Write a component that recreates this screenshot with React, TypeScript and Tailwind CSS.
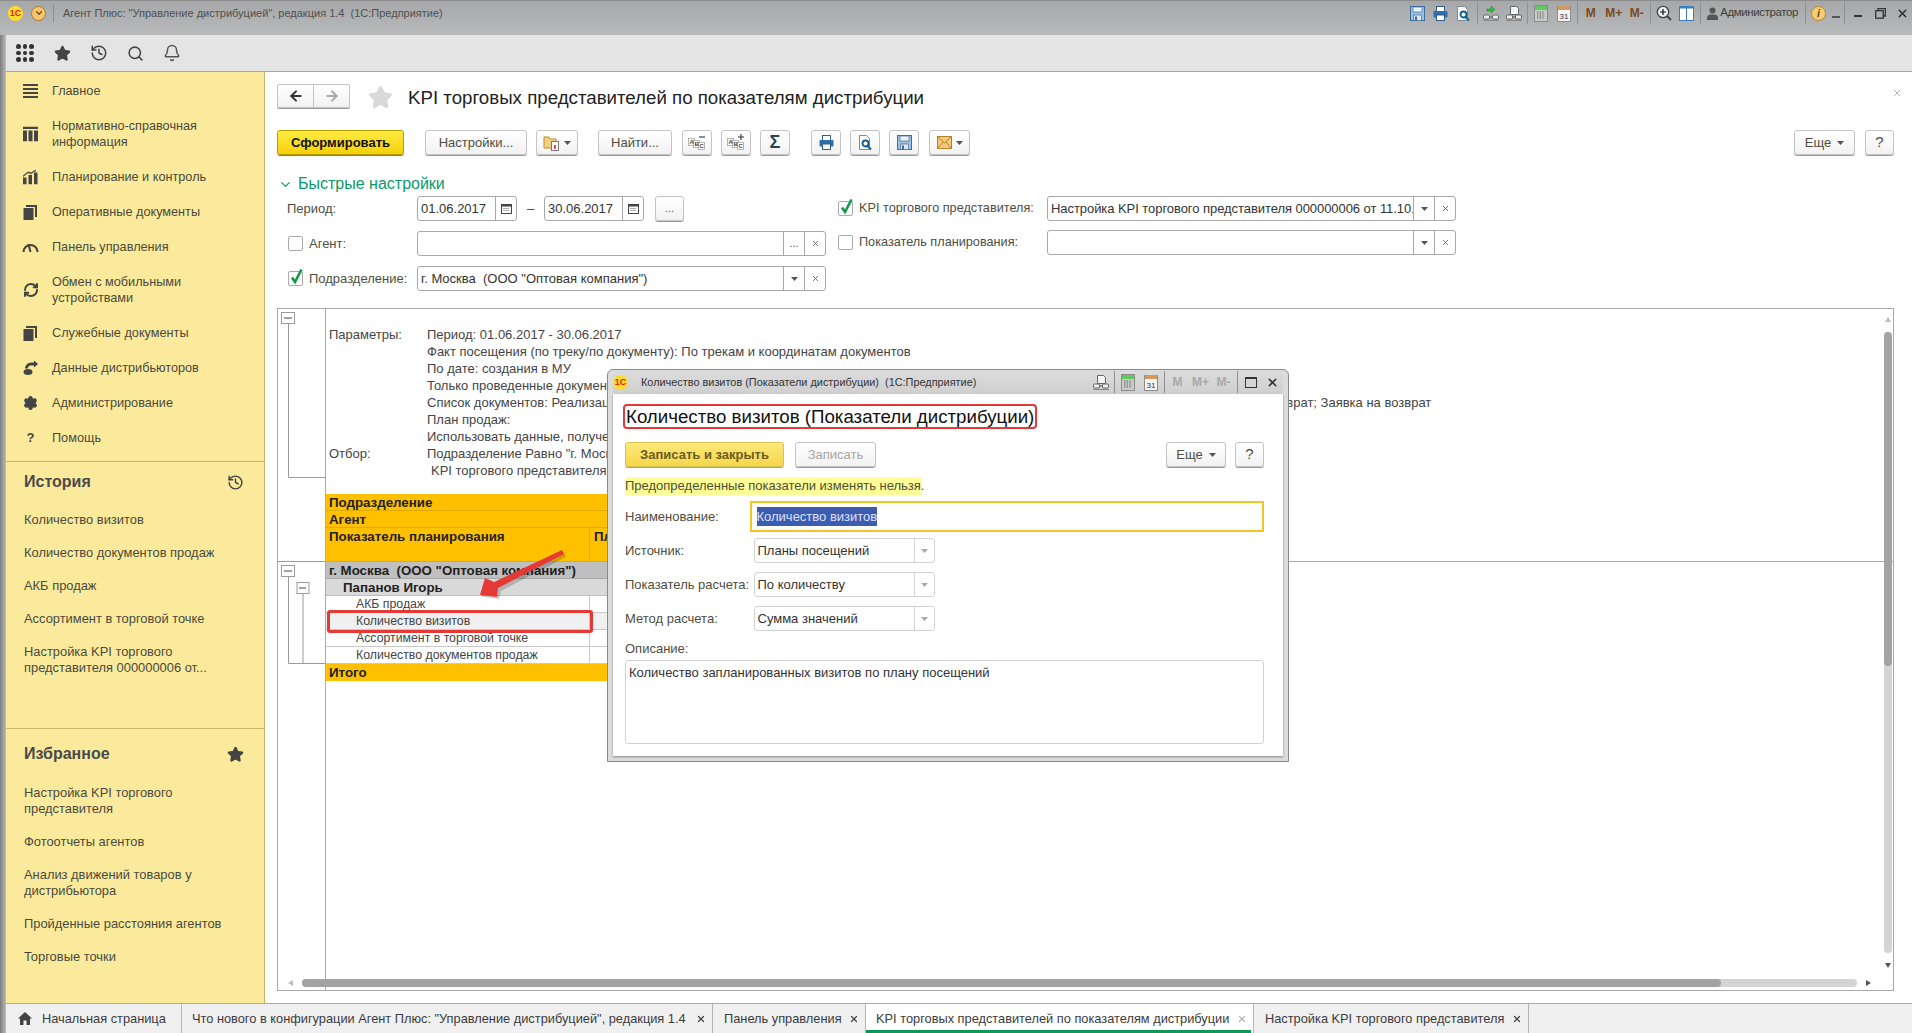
import type { ReactNode } from "react";
import { ArrowLeft, ArrowRight, Bell, ChevronDown, History, RefreshCw, Search, Settings, Star, X } from "lucide-react";

const navItems = [
  { label: ["Главное"], icon: "menu" },
  { label: ["Нормативно-справочная", "информация"], icon: "columns" },
  { label: ["Планирование и контроль"], icon: "bars" },
  { label: ["Оперативные документы"], icon: "docs" },
  { label: ["Панель управления"], icon: "gauge" },
  { label: ["Обмен с мобильными", "устройствами"], icon: "sync" },
  { label: ["Служебные документы"], icon: "docs2" },
  { label: ["Данные дистрибьюторов"], icon: "data" },
  { label: ["Администрирование"], icon: "gear" },
  { label: ["Помощь"], icon: "help" },
];

const historyItems = [
  ["Количество визитов"],
  ["Количество документов продаж"],
  ["АКБ продаж"],
  ["Ассортимент в торговой точке"],
  ["Настройка KPI торгового", "представителя 000000006 от..."],
];

const favoriteItems = [
  ["Настройка KPI торгового", "представителя"],
  ["Фотоотчеты агентов"],
  ["Анализ движений товаров у", "дистрибьютора"],
  ["Пройденные расстояния агентов"],
  ["Торговые точки"],
];

const params = [
  ["Параметры:", "Период: 01.06.2017 - 30.06.2017"],
  ["", "Факт посещения (по треку/по документу): По трекам и координатам документов"],
  ["", "По дате: создания в МУ"],
  ["", "Только проведенные документы"],
  ["", "Список документов: Реализация товаров и услуг; Заказы клиентов; Приходный кассовый ордер; Фотоотчет с торговой точки; Документ на возврат; Заявка на возврат"],
  ["", "План продаж:"],
  ["", "Использовать данные, полученные от агентов"],
  ["Отбор:", 'Подразделение Равно "г. Москва  (ООО "Оптовая компания")"'],
];

function NavIcon({ name }: { name: string }) {
  const c = "#444444";
  if (name === "menu")
    return (
      <svg width="15" height="15" viewBox="0 0 15 15" fill={c}>
        <rect y="0.5" width="15" height="2" />
        <rect y="4.5" width="15" height="2" />
        <rect y="8.5" width="15" height="2" />
        <rect y="12.5" width="15" height="2" />
      </svg>
    );
  if (name === "columns")
    return (
      <svg width="15" height="15" viewBox="0 0 15 15" fill={c}>
        <rect y="0" width="15" height="2.5" />
        <rect y="4" width="4" height="11" />
        <rect x="5.5" y="4" width="4" height="11" />
        <rect x="11" y="4" width="4" height="11" />
      </svg>
    );
  if (name === "bars")
    return (
      <svg width="15" height="15" viewBox="0 0 15 15" fill={c}>
        <rect y="8" width="3.5" height="7" />
        <rect x="5.5" y="5.5" width="3.5" height="9.5" />
        <rect x="11" y="3" width="3.5" height="12" />
        <path d="M0 6 5 2l3 1 5-3v1.5L8 4.5l-3-1-5 4z" />
      </svg>
    );
  if (name === "docs" || name === "docs2")
    return (
      <svg width="15" height="16" viewBox="0 0 15 16" fill={c}>
        <rect x="0.5" y="4" width="10" height="12" />
        <path d="M3 1h11v12h-2V3H3z" />
      </svg>
    );
  if (name === "gauge")
    return (
      <svg width="17" height="14" viewBox="0 0 17 14" fill="none" stroke={c} strokeWidth="2">
        <path d="M1.5 12a7 7 0 0 1 14 0" />
        <path d="M8.5 12 6.5 4" />
      </svg>
    );
  if (name === "sync") return <RefreshCw size={16} strokeWidth={3} color={c} />;
  if (name === "data")
    return (
      <svg width="16" height="15" viewBox="0 0 16 15" fill={c}>
        <path d="M2 8a6 6 0 0 1 6-6h3V0l4 3.5L11 7V5H8a3 3 0 0 0-3 3H2z" />
        <ellipse cx="5" cy="11.5" rx="4.5" ry="3" />
      </svg>
    );
  if (name === "gear") return <Settings size={15} strokeWidth={2.4} color={c} fill={c} />;
  return <span className="text-[13px] font-bold text-[#444]">?</span>;
}

function SideList({ items }: { items: string[][] }) {
  return (
    <div>
      {items.map((lines) => (
        <div key={lines[0]} className="py-[8.5px] pl-[18px] text-[12.9px] leading-4 text-[#4a4a3c]">
          {lines.map((l) => (
            <div key={l}>{l}</div>
          ))}
        </div>
      ))}
    </div>
  );
}

function Sidebar() {
  return (
    <aside className="flex w-[259px] shrink-0 flex-col border-r border-[#c4b866] bg-[#fbea9c]">
      <div className="pt-px">
        {navItems.map((item) => (
          <div key={item.label[0]} className="relative py-[9.5px] pl-[46px] text-[12.7px] leading-4 text-[#4a4a3c]">
            <span className="absolute left-4 top-1/2 flex w-[17px] -translate-y-1/2 justify-center">
              <NavIcon name={item.icon} />
            </span>
            {item.label.map((l) => (
              <div key={l}>{l}</div>
            ))}
          </div>
        ))}
      </div>
      <div className="mt-[6px] h-[267px] border-t border-[#c4b866] pt-[10px]">
        <div className="mb-[11px] flex h-5 items-center justify-between pl-[18px] pr-[20px] text-base font-bold text-[#4a4a4a]">
          История
          <History size={17} strokeWidth={2} color="#444" />
        </div>
        <SideList items={historyItems} />
      </div>
      <div className="border-t border-[#c4b866] pt-[15px]">
        <div className="mb-[12px] flex h-5 items-center justify-between pl-[18px] pr-[20px] text-base font-bold text-[#4a4a4a]">
          Избранное
          <Star size={17} fill="#444" color="#444" />
        </div>
        <SideList items={favoriteItems} />
      </div>
    </aside>
  );
}

function Logo() {
  return (
    <span className="flex h-[15px] w-[15px] items-center justify-center rounded-full bg-[#ffdc2e] text-[9px] font-bold leading-none text-[#d5281b]">
      1С
    </span>
  );
}

function TopIcon({ children, w = "w-[23px]" }: { children: ReactNode; w?: string }) {
  return <span className={`flex h-[24px] shrink-0 items-center justify-center ${w}`}>{children}</span>;
}

function Sep() {
  return <span className="mx-[1.5px] block h-[22px] w-px shrink-0 bg-[#8f8f8f]" />;
}

function FloppyIcon({ size = 15 }: { size?: number }) {
  return (
    <svg width={size} height={size} viewBox="0 0 15 15">
      <rect x="0.5" y="0.5" width="14" height="14" fill="#9fc2e4" stroke="#3e6c9c" />
      <rect x="3" y="1" width="9" height="5" fill="#eef4fa" stroke="#3e6c9c" strokeWidth="0.7" />
      <rect x="3.5" y="9" width="8" height="5.5" fill="#dfe8f0" stroke="#3e6c9c" strokeWidth="0.7" />
      <rect x="5" y="10.5" width="2" height="4" fill="#3e6c9c" />
    </svg>
  );
}

function PrinterIcon({ size = 15 }: { size?: number }) {
  return (
    <svg width={size} height={size} viewBox="0 0 15 15">
      <rect x="3.5" y="0.5" width="8" height="5" fill="#fff" stroke="#2f5f8c" />
      <rect x="0.5" y="5" width="14" height="6.5" rx="1" fill="#2f6fa3" />
      <rect x="3.5" y="9" width="8" height="5.5" fill="#fff" stroke="#2f5f8c" />
    </svg>
  );
}

function PreviewIcon({ size = 15 }: { size?: number }) {
  return (
    <svg width={size} height={size} viewBox="0 0 15 15">
      <path d="M1.5.5h7l3 3v11h-10z" fill="#fff" stroke="#7b8b99" />
      <circle cx="7.5" cy="8.5" r="3" fill="#fff" stroke="#0d5d8f" strokeWidth="1.8" />
      <path d="m9.5 11 3.5 3.5" stroke="#0d5d8f" strokeWidth="2" />
    </svg>
  );
}

function LinkDocIcon({ green }: { green?: boolean }) {
  return (
    <svg width="16" height="15" viewBox="0 0 16 15" fill="none">
      {green ? (
        <path d="M4 3h4V0l4 3.5L8 7V5H4z" fill="#2fc12f" stroke="#1b7a1b" strokeWidth="0.5" />
      ) : (
        <path d="M4.5.5h6l2 2v6h-8z" fill="#f4f4f4" stroke="#666" />
      )}
      <rect x="0.5" y="9" width="6" height="4" rx="1" fill="#eee" stroke="#666" />
      <rect x="9.5" y="9" width="6" height="4" rx="1" fill="#eee" stroke="#666" />
      <path d="M0 14.5h16" stroke="#888" />
      <path d="M6.5 11h3" stroke="#666" />
    </svg>
  );
}

function CalcIcon() {
  return (
    <svg width="14" height="17" viewBox="0 0 14 17">
      <rect x="0.5" y="0.5" width="13" height="16" fill="#c9ccc9" stroke="#8a8a8a" />
      <rect x="1" y="1" width="12" height="4" fill="#63c763" />
      <path d="M3 7h8M3 9h8M3 11h8M3 13h8" stroke="#666" strokeDasharray="1.4 1.2" />
    </svg>
  );
}

function CalIcon() {
  return (
    <svg width="14" height="17" viewBox="0 0 14 17">
      <rect x="0.5" y="1.5" width="13" height="15" fill="#f4f4f4" stroke="#8a8a8a" />
      <rect x="1" y="1" width="12" height="4" fill="#d39a5f" />
      <text x="7" y="14" fontSize="8" textAnchor="middle" fill="#333" fontFamily="Liberation Sans">
        31
      </text>
    </svg>
  );
}

function ZoomPlusIcon() {
  return (
    <svg width="16" height="16" viewBox="0 0 16 16" fill="none">
      <circle cx="7" cy="7" r="5.7" fill="#eee" stroke="#444" strokeWidth="1.3" />
      <path d="M7 4v6M4 7h6" stroke="#111" strokeWidth="1.2" />
      <path d="m11 11 4 4" stroke="#444" strokeWidth="2" />
    </svg>
  );
}

function MemIcons({ dim }: { dim?: boolean }) {
  const cls = dim ? "text-[#a9a9a9]" : "text-[#7a4a24]";
  return (
    <>
      {["M", "M+", "M-"].map((m) => (
        <TopIcon key={m}>
          <span className={`text-[12px] font-bold ${cls}`}>{m}</span>
        </TopIcon>
      ))}
    </>
  );
}

function TitleBar() {
  return (
    <div className="flex h-[35px] shrink-0 items-start justify-between border-t border-[#8d8d8d] bg-linear-to-b from-[#a6a7a8] to-[#b8b9ba]">
      <div className="flex h-[24px] items-center">
        <span className="ml-[8px]">
          <Logo />
        </span>
        <span className="ml-[8px] flex h-[15px] w-[15px] items-center justify-center rounded-full border border-[#b47a1f] bg-[#f4c56f]">
          <ChevronDown size={10} strokeWidth={3} color="#6b4a10" />
        </span>
        <span className="ml-[7px] h-[18px] w-px bg-[#8f8f8f]" />
        <span className="ml-[9px] whitespace-pre text-[11px] text-[#4f5050]">
          Агент Плюс: "Управление дистрибуцией", редакция 1.4  (1С:Предприятие)
        </span>
      </div>
      <div className="flex h-[24px] items-center">
        <TopIcon><FloppyIcon /></TopIcon>
        <TopIcon><PrinterIcon /></TopIcon>
        <TopIcon><PreviewIcon /></TopIcon>
        <Sep />
        <TopIcon><LinkDocIcon green /></TopIcon>
        <TopIcon><LinkDocIcon /></TopIcon>
        <Sep />
        <TopIcon><CalcIcon /></TopIcon>
        <TopIcon><CalIcon /></TopIcon>
        <Sep />
        <MemIcons />
        <Sep />
        <TopIcon><ZoomPlusIcon /></TopIcon>
        <TopIcon>
          <svg width="15" height="15" viewBox="0 0 15 15">
            <rect x="0.5" y="0.5" width="14" height="14" fill="#fff" stroke="#3a80c0" />
            <rect x="0" y="0" width="15" height="2.5" fill="#3a80c0" />
            <rect x="7" y="0" width="1" height="15" fill="#3a80c0" />
          </svg>
        </TopIcon>
        <Sep />
        <span className="ml-[3px] flex w-[14px] justify-center">
          <svg width="11" height="13" viewBox="0 0 11 13" fill="#555">
            <circle cx="5.5" cy="3.5" r="3" />
            <path d="M0 13V11q0-2.5 3-3.5h5q3 1 3 3.5V13z" />
          </svg>
        </span>
        <span className="ml-[1px] text-[11.5px] tracking-[-0.4px] text-[#3f3f36]">Администратор</span>
        <span className="ml-[5px]"><Sep /></span>
        <TopIcon>
          <span className="flex h-[15px] w-[15px] items-center justify-center rounded-full border border-[#bd8426] bg-[#f6cd72] text-[11px] font-bold italic leading-none text-[#6b4a10]">
            i
          </span>
        </TopIcon>
        <span className="flex w-3 items-center justify-center pt-[8px]">
          <span className="h-[2px] w-[8px] bg-[#555]" />
        </span>
        <Sep />
        <TopIcon><span className="mt-[6px] h-[2px] w-[8px] bg-[#333]" /></TopIcon>
        <TopIcon>
          <svg width="11" height="11" viewBox="0 0 11 11" fill="none" stroke="#333" strokeWidth="1.3">
            <rect x="0.7" y="2.7" width="7.5" height="7.5" />
            <path d="M3 2.7V.7h7.3V8H8" />
          </svg>
        </TopIcon>
        <TopIcon w="w-[20px]"><X size={13} strokeWidth={3} color="#333" /></TopIcon>
      </div>
    </div>
  );
}

function AppToolbar() {
  return (
    <div className="flex h-[37px] shrink-0 items-center border-b border-[#a8a8a8] bg-[#e4e4e4]">
      <span className="ml-[10px] grid w-[18px] grid-cols-3 gap-[2px]">
        {Array.from({ length: 9 }).map((_, i) => (
          <span key={i} className="h-[4.5px] w-[4.5px] rounded-full bg-[#333]" />
        ))}
      </span>
      <Star size={17} fill="#444" color="#444" className="ml-[20px]" />
      <History size={18} color="#444" className="ml-[19px]" />
      <Search size={17} color="#444" strokeWidth={2.2} className="ml-[19px]" />
      <Bell size={18} color="#555" className="ml-[19px]" />
    </div>
  );
}

function Btn({ className = "", children }: { className?: string; children: ReactNode }) {
  return (
    <div
      className={`flex h-[25px] shrink-0 items-center justify-center rounded-[3px] border border-[#c4c4c4] bg-linear-to-b from-white to-[#f2f2f2] text-[13px] text-[#4e4e40] shadow-[0_1px_0_#9a9a9a] ${className}`}
    >
      {children}
    </div>
  );
}

function Caret({ color = "#555" }: { color?: string }) {
  return (
    <svg width="7" height="4" viewBox="0 0 7 4" fill={color}>
      <path d="M0 0h7L3.5 4z" />
    </svg>
  );
}

function CalSmall() {
  return (
    <svg width="11" height="11" viewBox="0 0 11 11">
      <rect x="0.5" y="1.5" width="10" height="9" fill="#fff" stroke="#444" />
      <rect x="1" y="1" width="9" height="2.5" fill="#444" />
      <path d="M2.5 5.5h6M2.5 7.5h6" stroke="#555" strokeDasharray="1 1" />
    </svg>
  );
}

function XSmall() {
  return <X size={9} strokeWidth={2.2} color="#555" />;
}

function Dots() {
  return <span className="text-[11px] leading-none text-[#555]">...</span>;
}

function AbcIcon({ sign }: { sign: "-" | "+" }) {
  return (
    <svg width="20" height="17" viewBox="0 0 20 17" fontFamily="Liberation Sans" fontSize="6" fontWeight="bold" fill="#444">
      <rect x="1.5" y="4.5" width="6" height="7" fill="#fff" stroke="#999" strokeWidth="0.7" />
      <rect x="6.5" y="6.5" width="6" height="7" fill="#fff" stroke="#999" strokeWidth="0.7" />
      <rect x="11.5" y="8.5" width="6" height="7" fill="#fff" stroke="#999" strokeWidth="0.7" />
      <text x="2.5" y="10">A</text>
      <text x="7.5" y="12">B</text>
      <text x="12.5" y="14">C</text>
      <path d={sign === "-" ? "M12 3h6" : "M12 3h6M15 0v6"} stroke="#333" strokeWidth="1.1" />
    </svg>
  );
}

function FieldBox({
  className = "",
  text = "",
  parts,
  border = "border-[#a9a9a9]",
  textClass = "",
}: {
  className?: string;
  text?: string;
  parts: { w: string; el: ReactNode }[];
  border?: string;
  textClass?: string;
}) {
  return (
    <div className={`flex h-[25px] shrink-0 items-stretch rounded-[3px] border bg-white ${border} ${className}`}>
      <div className={`min-w-0 flex-1 overflow-hidden whitespace-pre pl-[3px] text-[13px] leading-[23px] text-[#333] ${textClass}`}>
        {text}
      </div>
      {parts.map((p, i) => (
        <div key={i} className={`flex shrink-0 items-center justify-center border-l ${border} ${p.w}`}>
          {p.el}
        </div>
      ))}
    </div>
  );
}

function Check({ on }: { on?: boolean }) {
  return (
    <span className="relative block h-[15px] w-[15px] shrink-0 rounded-[2px] border border-[#a9a9a9] bg-white">
      {on && (
        <svg className="absolute -top-[4px] left-0" width="15" height="17" viewBox="0 0 15 17" fill="none">
          <path d="M3 9.5 6 14 12.5 1.5" stroke="#0f9a4a" strokeWidth="2.6" />
        </svg>
      )}
    </span>
  );
}

function QuickSettings() {
  const label = "text-[13px] text-[#4e4e40]";
  const labelRight = "text-[12.7px] text-[#4e4e40]";
  return (
    <div className="mt-[2px] flex">
      <div className="flex w-[550px] shrink-0 flex-col gap-[10px]">
        <div className="flex items-center">
          <span className={`ml-[10px] w-[130px] ${label}`}>Период:</span>
          <FieldBox className="w-[100px]" text="01.06.2017" parts={[{ w: "w-[21px]", el: <CalSmall /> }]} />
          <span className="w-[27px] text-center text-[13px] text-[#444]">–</span>
          <FieldBox className="w-[100px]" text="30.06.2017" parts={[{ w: "w-[21px]", el: <CalSmall /> }]} />
          <Btn className="ml-[11px] w-[29px]"><Dots /></Btn>
        </div>
        <div className="flex items-center">
          <span className="ml-[11px]"><Check /></span>
          <span className={`ml-[6px] w-[108px] ${label}`}>Агент:</span>
          <FieldBox
            className="w-[409px]"
            parts={[
              { w: "w-[21px]", el: <Dots /> },
              { w: "w-[21px]", el: <XSmall /> },
            ]}
          />
        </div>
        <div className="flex items-center">
          <span className="ml-[11px]"><Check on /></span>
          <span className={`ml-[6px] w-[108px] whitespace-nowrap ${label}`}>Подразделение:</span>
          <FieldBox
            className="w-[409px]"
            text={'г. Москва  (ООО "Оптовая компания")'}
            parts={[
              { w: "w-[21px]", el: <Caret /> },
              { w: "w-[21px]", el: <XSmall /> },
            ]}
          />
        </div>
      </div>
      <div className="ml-[11px] flex w-[618px] flex-col gap-[9px]">
        <div className="flex items-center">
          <Check on />
          <span className={`ml-[6px] w-[188px] whitespace-nowrap ${labelRight}`}>KPI торгового представителя:</span>
          <FieldBox
            className="w-[409px]"
            textClass="tracking-[-0.06px]"
            text="Настройка KPI торгового представителя 000000006 от 11.10.2017 12:00:00"
            parts={[
              { w: "w-[21px]", el: <Caret /> },
              { w: "w-[21px]", el: <XSmall /> },
            ]}
          />
        </div>
        <div className="flex items-center">
          <Check />
          <span className={`ml-[6px] w-[188px] whitespace-nowrap ${labelRight}`}>Показатель планирования:</span>
          <FieldBox
            className="w-[409px]"
            parts={[
              { w: "w-[21px]", el: <Caret /> },
              { w: "w-[21px]", el: <XSmall /> },
            ]}
          />
        </div>
      </div>
    </div>
  );
}

function TreeGutter() {
  const line = "#9a9a9a";
  return (
    <svg width="47" height="680" viewBox="0 0 47 680" fill="none" className="shrink-0">
      <g stroke={line}>
        <path d="M10.5 14v154.5H47" />
        <path d="M0 252.5h47" />
        <path d="M10.5 267v87.5H47" />
        <path d="M25 284v70" />
        <rect x="3.5" y="3.5" width="13" height="11" fill="#fff" />
        <rect x="3.5" y="256.5" width="13" height="11" fill="#fff" />
        <rect x="19" y="273.5" width="12" height="11" fill="#fff" />
      </g>
      <g stroke="#444">
        <path d="M6 9h8M6 262h8M21 279h7" />
      </g>
    </svg>
  );
}

function DataRow({ text, selected }: { text: string; selected?: boolean }) {
  return (
    <div className={`relative grid h-[17px] grid-cols-[264px_1fr] border-b border-[#c9c9c9] text-[12.3px] leading-[16px] text-[#444] ${selected ? "bg-[#f0f0f0]" : "bg-white"}`}>
      <span className="border-r border-[#c9c9c9] pl-[30px]">{text}</span>
      <span />
      {selected && (
        <span className="absolute -top-[3px] left-px z-10 h-[23px] w-[266px] rounded-[3px] border-[3px] border-[#e53935]" />
      )}
    </div>
  );
}

function Report() {
  return (
    <div className="relative mt-[17px] flex h-[683px] overflow-hidden border border-[#a9a9a9] bg-white">
      <div className="shrink-0 border-r border-[#a9a9a9]">
        <TreeGutter />
      </div>
      <div className="min-w-0 flex-1 pt-[17px] text-[13px] leading-[17px] text-[#444]">
        {params.map(([a, b], i) => (
          <div key={i} className="flex h-[17px] whitespace-pre pl-[3px]">
            <span className="w-[98px] shrink-0">{a}</span>
            <span>{b}</span>
          </div>
        ))}
        <div className="ml-[105px] h-[16px] whitespace-nowrap">KPI торгового представителя Равно "Настройка KPI"</div>
        <div className="mt-[16px] border-b border-[#a9a9a9]">
          <div className="w-[295px] bg-[#ffc000] text-[13.3px] font-bold text-[#222]">
            <div className="h-[17px] border-b border-[#e0ab00] pl-[3px] leading-[17px]">Подразделение</div>
            <div className="h-[17px] border-b border-[#e0ab00] pl-[3px] leading-[17px]">Агент</div>
            <div className="grid h-[33px] grid-cols-[264px_1fr] leading-[17px]">
              <span className="border-r border-[#e0ab00] pl-[3px]">Показатель планирования</span>
              <span className="pl-[4px]">План</span>
            </div>
          </div>
        </div>
        <div className="w-[295px] text-[13.3px]">
          <div className="h-[17px] whitespace-pre border-b border-[#a9a9a9] bg-[#bfbfbf] pl-[3px] font-bold leading-[17px] text-[#222]">
            г. Москва  (ООО "Оптовая компания")
          </div>
          <div className="h-[17px] border-b border-[#bdbdbd] bg-[#d9d9d9] pl-[17px] font-bold leading-[17px] text-[#222]">
            Папанов Игорь
          </div>
          <DataRow text="АКБ продаж" />
          <DataRow text="Количество визитов" selected />
          <DataRow text="Ассортимент в торговой точке" />
          <DataRow text="Количество документов продаж" />
          <div className="h-[17px] bg-[#ffc000] pl-[3px] font-bold leading-[17px] text-[#222]">Итого</div>
        </div>
      </div>

      <span className="absolute left-[1606px] top-[23px] h-[621px] w-[8px] rounded-full bg-[#d4d4d4]" />
      <span className="absolute left-[1606px] top-[23px] h-[334px] w-[8px] rounded-full bg-[#a3a3a3]" />
      <span className="absolute left-[1607px] top-[8px] h-0 w-0 border-x-[3px] border-b-[5px] border-x-transparent border-b-[#bdbdbd]" />
      <span className="absolute left-[1607px] top-[654px] h-0 w-0 border-x-[3px] border-t-[5px] border-x-transparent border-t-[#555]" />

      <span className="absolute left-[24px] top-[670px] h-[8px] w-[1555px] rounded-full bg-[#d4d4d4]" />
      <span className="absolute left-[24px] top-[670px] h-[8px] w-[1419px] rounded-full bg-[#a3a3a3]" />
      <span className="absolute left-[10px] top-[671px] h-0 w-0 border-y-[3px] border-r-[5px] border-y-transparent border-r-[#bdbdbd]" />
      <span className="absolute left-[1588px] top-[671px] h-0 w-0 border-y-[3px] border-l-[5px] border-y-transparent border-l-[#555]" />
    </div>
  );
}

function Select({ text }: { text: string }) {
  return (
    <FieldBox
      className="w-[181px]"
      border="border-[#d2d2d2]"
      text={text}
      parts={[{ w: "w-[20px]", el: <Caret color="#aaa" /> }]}
    />
  );
}

function FormRow({ label, children, className = "" }: { label: string; children: ReactNode; className?: string }) {
  return (
    <div className={`flex items-center ${className}`}>
      <span className="w-[128.5px] shrink-0 whitespace-nowrap text-[13px] text-[#4e4e40]">{label}</span>
      {children}
    </div>
  );
}

function Dialog() {
  return (
    <div className="absolute left-[607px] top-[369px] flex h-[393px] w-[682px] flex-col rounded-t-[6px] border border-[#8a8a8a] bg-[#dcdcdc] px-[5px] pb-[5px]">
      <div className="flex h-[24px] shrink-0 items-center bg-linear-to-b from-[#dcdcdc] to-[#cfcfcf]">
        <Logo />
        <span className="ml-[13px] whitespace-pre text-[10.9px] text-[#333]">
          Количество визитов (Показатели дистрибуции)  (1С:Предприятие)
        </span>
        <div className="ml-auto flex items-center">
          <TopIcon><LinkDocIcon /></TopIcon>
          <Sep />
          <TopIcon><CalcIcon /></TopIcon>
          <TopIcon><CalIcon /></TopIcon>
          <Sep />
          <MemIcons dim />
          <Sep />
          <TopIcon><span className="h-[11px] w-[12px] border border-t-2 border-[#333]" /></TopIcon>
          <TopIcon w="w-[21px]"><X size={13} strokeWidth={3} color="#333" /></TopIcon>
        </div>
      </div>
      <div className="flex-1 bg-white pl-[12px] pr-[19px] pt-[10px] shadow-[0_1px_2px_#888]">
        <div className="-ml-[2px] w-[414px] rounded-[4px] border-2 border-[#e53935] pl-[1px] text-[18.7px] leading-[21px] whitespace-nowrap text-[#111]">
          Количество визитов (Показатели дистрибуции)
        </div>
        <div className="mt-[13px] flex">
          <div className="flex h-[25px] w-[159px] items-center justify-center rounded-[3px] border border-[#d9c24f] bg-linear-to-b from-[#fde978] to-[#f6d64a] text-[13px] font-bold text-[#6b5c26] shadow-[0_1px_0_#b9a54a]">
            Записать и закрыть
          </div>
          <Btn className="ml-[11px] w-[81px] text-[#a6a6a6]!">Записать</Btn>
          <Btn className="ml-auto w-[60px] gap-[6px]">
            Еще <Caret />
          </Btn>
          <Btn className="ml-[9px] w-[29px] text-[15px]!">?</Btn>
        </div>
        <div className="mt-[10px] h-[18px] w-[297px] bg-[#ffff99] text-[13px] leading-[18px] whitespace-nowrap text-[#4e4e30]">
          Предопределенные показатели изменять нельзя.
        </div>
        <FormRow label="Наименование:" className="mt-[6px]">
          <div className="-ml-[4px] flex h-[31px] w-[523px] items-center border-2 border-[#f6c51f] pl-[5px] text-[13px]">
            <span className="bg-[#3d5cb0] text-[#d8e2ff]">Количество визитов</span>
          </div>
        </FormRow>
        <FormRow label="Источник:" className="mt-[6px]"><Select text="Планы посещений" /></FormRow>
        <FormRow label="Показатель расчета:" className="mt-[9px]"><Select text="По количеству" /></FormRow>
        <FormRow label="Метод расчета:" className="mt-[9px]"><Select text="Сумма значений" /></FormRow>
        <div className="mt-[8px] h-[20px] text-[13px] text-[#4e4e40]">Описание:</div>
        <div className="mt-[1px] h-[84px] w-[639px] rounded-[3px] border border-[#d2d2d2] px-[3px] pt-[4px] text-[13px] leading-4 text-[#333]">
          Количество запланированных визитов по плану посещений
        </div>
      </div>
    </div>
  );
}

function Tab({
  w,
  pl,
  label,
  active,
  home,
}: {
  w: string;
  pl: string;
  label: string;
  active?: boolean;
  home?: boolean;
}) {
  return (
    <div
      className={`relative flex shrink-0 items-center border-r border-[#b5b5b5] text-[12.8px] whitespace-nowrap text-[#3c3c3c] ${w} ${pl} ${active ? "bg-white" : ""}`}
    >
      {home && (
        <svg width="14" height="13" viewBox="0 0 14 13" fill="#444" className="mr-[10px]">
          <path d="M7 0 0 6.5h2V13h3.5V8.5h3V13H12V6.5h2z" />
        </svg>
      )}
      <span>{label}</span>
      {!home && <X size={10} strokeWidth={3} color={active ? "#b5b5b5" : "#444"} className="absolute right-[6px]" />}
      {active && <span className="absolute bottom-0 left-0 h-[3px] w-[385px] bg-[#0a9a55]" />}
    </div>
  );
}

function Tabs() {
  return (
    <div className="flex h-[30px] shrink-0 border-t border-[#a9a9a9] bg-[#f0f0f0]">
      <Tab w="w-[176px]" pl="pl-[12px]" label="Начальная страница" home />
      <Tab w="w-[531px]" pl="pl-[10px]" label={'Что нового в конфигурации Агент Плюс: "Управление дистрибуцией", редакция 1.4'} />
      <Tab w="w-[153px]" pl="pl-[11px]" label="Панель управления" />
      <Tab w="w-[388px]" pl="pl-[10px]" label="KPI торговых представителей по показателям дистрибуции" active />
      <Tab w="w-[275px]" pl="pl-[11px]" label="Настройка KPI торгового представителя" />
    </div>
  );
}

export default function App() {
  return (
    <div className="relative flex h-[1033px] w-[1912px] flex-col overflow-hidden bg-white font-['Liberation_Sans',Arial,sans-serif]">
      <TitleBar />
      <div className="flex min-h-0 flex-1">
        <div className="w-[6px] shrink-0 bg-linear-to-r from-[#7d7d7d] to-[#bdbdbd]" />
        <div className="flex min-w-0 flex-1 flex-col">
          <AppToolbar />
          <div className="flex min-h-0 flex-1">
            <Sidebar />
            <main className="relative min-w-0 flex-1 pl-[12px] pr-[18px] pt-[12px]">
              <X size={12} color="#b5b5b5" className="absolute right-[9px] top-[15px]" />
              <div className="flex h-[24px] items-center">
                <div className="flex h-[24px] w-[73px] rounded-[2px] border border-[#c4c4c4] bg-linear-to-b from-white to-[#f2f2f2] shadow-[0_1px_0_#9a9a9a]">
                  <span className="flex flex-1 items-center justify-center border-r border-[#c4c4c4]">
                    <ArrowLeft size={16} strokeWidth={3} color="#333" />
                  </span>
                  <span className="flex flex-1 items-center justify-center">
                    <ArrowRight size={16} strokeWidth={3} color="#a9a9a9" />
                  </span>
                </div>
                <Star size={25} fill="#d9d9d9" color="#d9d9d9" className="ml-[18px] mt-[2px]" />
                <h1 className="ml-[15px] mt-[4px] whitespace-nowrap text-[18.7px] font-normal text-[#222]">
                  KPI торговых представителей по показателям дистрибуции
                </h1>
              </div>
              <div className="mt-[22px] flex h-[26px] items-start">
                <div className="flex h-[25px] w-[127px] items-center justify-center rounded-[3px] border border-[#b89d00] bg-linear-to-b from-[#ffeb3b] to-[#f5d000] text-[13px] font-bold text-[#111] shadow-[0_1px_0_#9a8400]">
                  Сформировать
                </div>
                <Btn className="ml-[21px] w-[102px]">Настройки...</Btn>
                <Btn className="ml-[9px] w-[42px] gap-[4px]">
                  <svg width="17" height="17" viewBox="0 0 17 17">
                    <path d="M1 3h5l1 2h6v9H1z" fill="#f2cf7e" stroke="#c08f2d" />
                    <rect x="8.5" y="7.5" width="7" height="9" fill="#fff" stroke="#777" />
                    <rect x="11" y="11" width="2" height="4" fill="#d9534f" />
                  </svg>
                  <Caret />
                </Btn>
                <Btn className="ml-[20px] w-[74px]">Найти...</Btn>
                <Btn className="ml-[10px] w-[30px]"><AbcIcon sign="-" /></Btn>
                <Btn className="ml-[9px] w-[30px]"><AbcIcon sign="+" /></Btn>
                <Btn className="ml-[9px] w-[30px] text-[18px]! font-bold text-[#2d3e50]!">Σ</Btn>
                <Btn className="ml-[21px] w-[30px]"><PrinterIcon /></Btn>
                <Btn className="ml-[9px] w-[30px]"><PreviewIcon /></Btn>
                <Btn className="ml-[9px] w-[30px]"><FloppyIcon /></Btn>
                <Btn className="ml-[10px] w-[41px] gap-[4px]">
                  <svg width="15" height="13" viewBox="0 0 15 13">
                    <rect x="0.5" y="0.5" width="14" height="12" fill="#f6c97a" stroke="#b9802a" />
                    <path d="m1 1 6.5 6L14 1M1 12l5-6M14 12 9 6" fill="none" stroke="#b9802a" />
                  </svg>
                  <Caret />
                </Btn>
                <Btn className="ml-auto w-[61px] gap-[6px]">
                  Еще <Caret />
                </Btn>
                <Btn className="ml-[10px] w-[29px] text-[15px]!">?</Btn>
              </div>
              <div className="mt-[18px] flex h-[20px] items-center text-[16px] text-[#0a9a6a]">
                <ChevronDown size={15} strokeWidth={2} className="ml-[1px] mr-[5px]" />
                Быстрые настройки
              </div>
              <QuickSettings />
              <Report />
            </main>
          </div>
          <Tabs />
        </div>
      </div>
      <svg className="pointer-events-none absolute left-[470px] top-[540px]" width="100" height="62" viewBox="0 0 100 62">
        <polygon points="92,11 94,15 29,49 27,57 10,55 15,38 25,43" fill="#000" opacity="0.18" transform="translate(2 2)" />
        <polygon points="92,10 94,14 28,48 27,57 10,55 15,38 24,42" fill="#e53935" />
      </svg>
      <Dialog />
    </div>
  );
}
